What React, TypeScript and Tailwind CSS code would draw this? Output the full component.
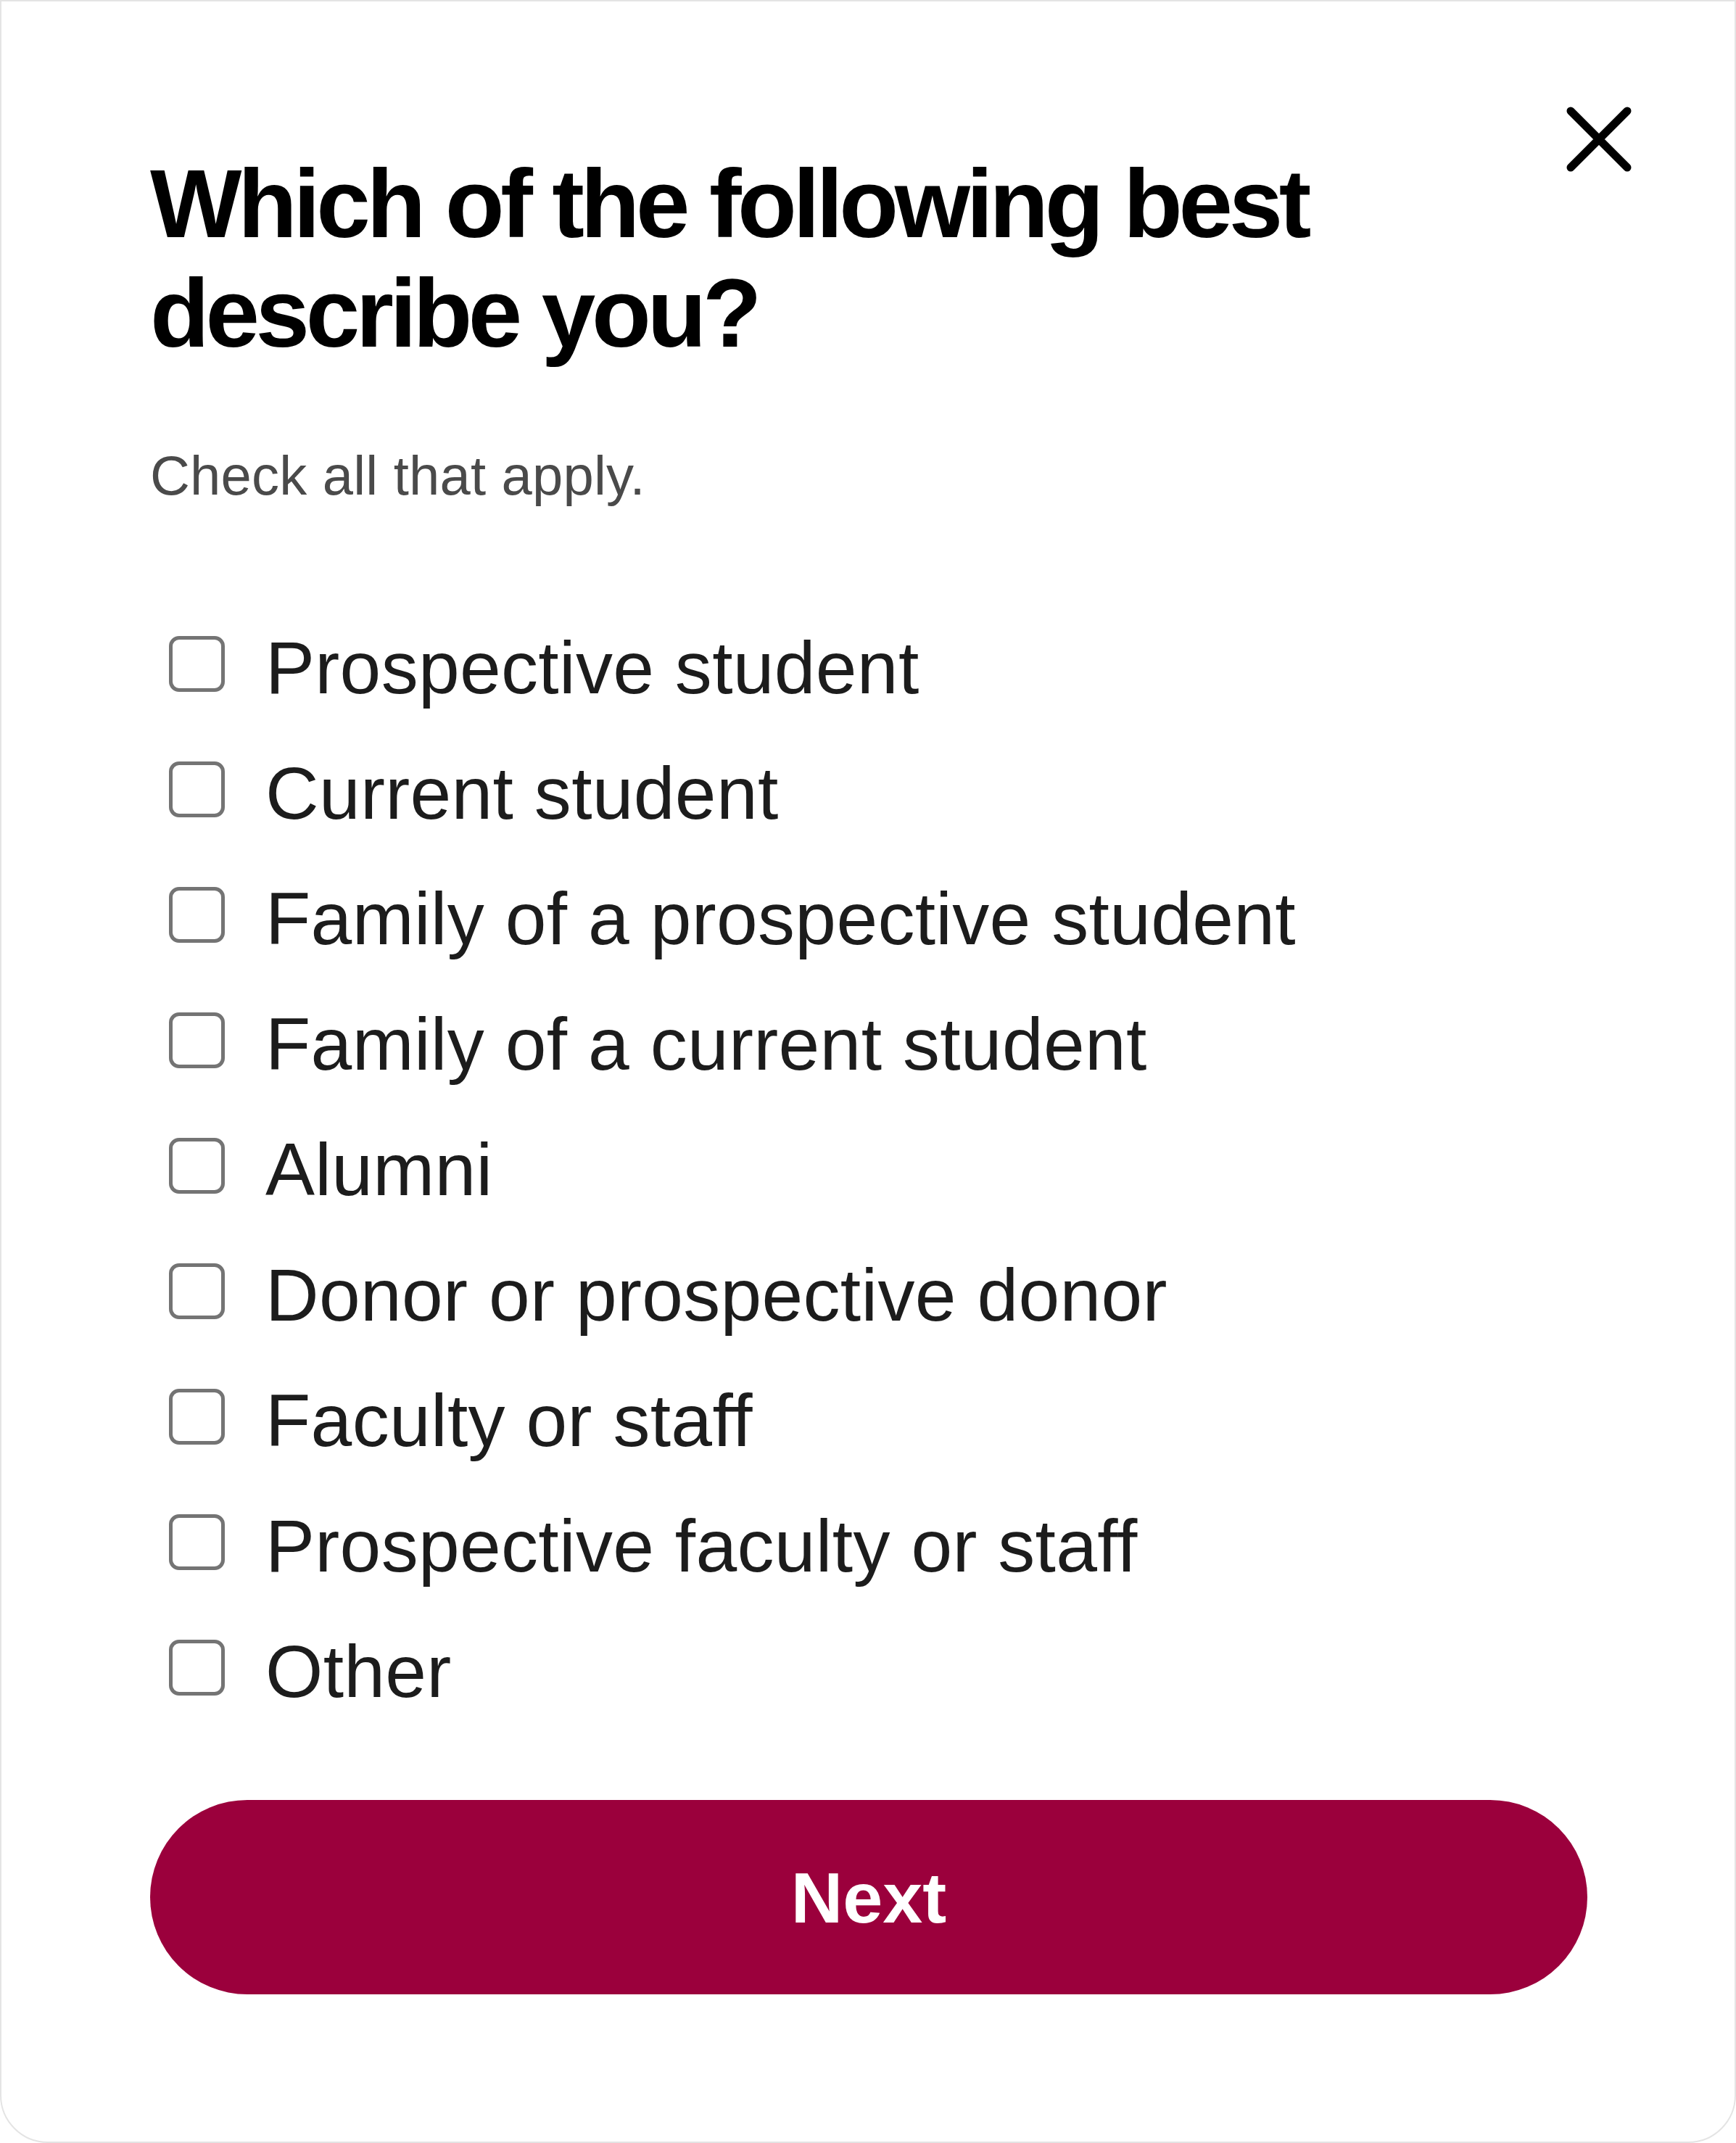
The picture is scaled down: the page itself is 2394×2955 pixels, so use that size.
import React, { useState } from "react";

const options = [
  "Prospective student",
  "Current student",
  "Family of a prospective student",
  "Family of a current student",
  "Alumni",
  "Donor or prospective donor",
  "Faculty or staff",
  "Prospective faculty or staff",
  "Other",
];

const App = () => {
  const [checked, setChecked] = useState<string[]>([]);

  const toggle = (opt: string) => {
    setChecked((prev) => (prev.includes(opt) ? prev.filter((o) => o !== opt) : [...prev, opt]));
  };

  return (
    <div className="min-h-screen w-full bg-white" style={{ fontFamily: '"Liberation Sans", Arial, Helvetica, sans-serif' }}>
      <div className="relative w-full h-[2955px] bg-white border-[2px] border-[#e4e4e4] rounded-b-[66px] overflow-hidden">
        {/* close button */}
        <button className="absolute top-[145px] right-[142px] w-[90px] h-[90px]" aria-label="Close">
          <svg viewBox="0 0 90 90" className="w-full h-full">
            <path d="M6 6 L84 84 M84 6 L6 84" stroke="#000" strokeWidth="11" strokeLinecap="round" fill="none" />
          </svg>
        </button>

        <div className="pl-[205px] pr-[203px] pt-[203px]">
          <h1 className="text-[134px] leading-[151px] font-bold tracking-[-5.4px] text-black pr-[180px]">
            Which of the following best describe you?
          </h1>
          <p className="mt-[103px] text-[76px] leading-[91px] tracking-[0.2px] text-[#4a4a4a]">Check all that apply.</p>

          <ul className="mt-[134px] flex flex-col">
            {options.map((opt) => (
              <li key={opt} className="h-[173px] flex items-center">
                <label className="flex items-center cursor-pointer">
                  <span
                    onClick={() => toggle(opt)}
                    className={`ml-[26px] mb-[12px] w-[77px] h-[77px] rounded-[14px] border-[5px] border-[#747474] flex items-center justify-center ${
                      checked.includes(opt) ? "bg-[#9b003c] border-[#9b003c]" : "bg-white"
                    }`}
                  />
                  <span
                    onClick={() => toggle(opt)}
                    className="ml-[56px] text-[102px] leading-[117px] tracking-[0.3px] text-[#1c1c1c]"
                  >
                    {opt}
                  </span>
                </label>
              </li>
            ))}
          </ul>

          <button className="mt-[90px] w-full h-[268px] rounded-full bg-[#9b003c] text-white font-bold text-[99px] leading-none">
            Next
          </button>
        </div>
      </div>
    </div>
  );
};

export default App;
